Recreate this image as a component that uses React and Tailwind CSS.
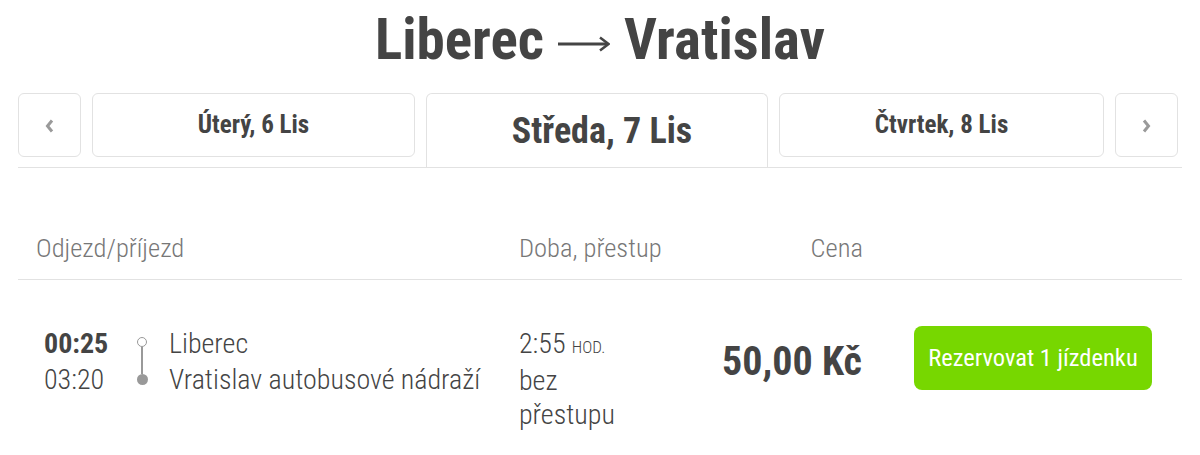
import React from "react";

const font = { fontFamily: '"Roboto Condensed", Roboto, "Liberation Sans", sans-serif' };

function Chevron({ dir }) {
  const pts = dir === "left" ? "7,1.5 2.5,7 7,12.5" : "2,1.5 6.5,7 2,12.5";
  return (
    <svg width="9" height="14" viewBox="0 0 9 14">
      <polyline points={pts} fill="none" stroke="#9a9a9a" strokeWidth="3" strokeLinejoin="miter" />
    </svg>
  );
}

function SmallTab({ children, className = "" }) {
  return (
    <div
      className={
        "h-[64px] mb-[10px] rounded-[6px] border border-[#e2e2e2] flex items-center justify-center text-[25px] font-bold text-[#444] " +
        className
      }
    >
      {children}
    </div>
  );
}

export default function App() {
  return (
    <div className="w-[1200px] h-[455px] bg-white overflow-hidden" style={font}>
      <h1 className="pt-[11px] flex justify-center items-center gap-[14px] text-[57px] leading-none font-bold text-[#444]">
        <span>Liberec</span>
        <span aria-label="→" className="flex items-center pt-[8px]">
          <svg width="52" height="16" viewBox="0 0 52 16">
            <path d="M0 8 H50" stroke="#444" strokeWidth="3" fill="none" />
            <path d="M42 1.5 L50.5 8 L42 14.5" stroke="#444" strokeWidth="2.5" fill="none" strokeLinejoin="miter" />
          </svg>
        </span>
        <span>Vratislav</span>
      </h1>

      <div className="mx-[18px] mt-[25px] flex items-start gap-[11px] border-b border-[#e2e2e2]">
        <SmallTab className="w-[63px] pt-[2px]">
          <Chevron dir="left" />
        </SmallTab>
        <SmallTab className="w-[323px]">Úterý, 6 Lis</SmallTab>
        <div className="w-[342px] h-[74px] -mb-px bg-white rounded-t-[6px] border border-b-0 border-[#e2e2e2] flex items-center justify-center pl-[10px] text-[36px] font-bold text-[#444]">
          Středa, 7 Lis
        </div>
        <SmallTab className="w-[325px]">Čtvrtek, 8 Lis</SmallTab>
        <SmallTab className="w-[63px] pt-[2px]">
          <Chevron dir="right" />
        </SmallTab>
      </div>

      <div className="mx-[18px] mt-[64px] flex border-b border-[#e2e2e2] pb-[15px] text-[26.5px] font-light text-[#777] leading-[32px]">
        <div className="w-[501px] pl-[18px]">Odjezd/příjezd</div>
        <div className="w-[240px]">Doba, přestup</div>
        <div className="w-[104px] text-right">Cena</div>
      </div>

      <div className="mx-[18px] mt-[46px] flex items-start text-[28px] font-light text-[#444]">
        <div className="w-[106px] pl-[26px] leading-[36px]">
          <div className="font-bold">00:25</div>
          <div>03:20</div>
        </div>
        <div className="w-[36px] flex flex-col items-center pt-[11px]">
          <div className="w-[10px] h-[10px] rounded-full border-[1.5px] border-[#999] bg-white" />
          <div className="w-[1.5px] h-[27px] bg-[#999]" />
          <div className="w-[11px] h-[11px] rounded-full bg-[#999]" />
        </div>
        <div className="w-[359px] pl-[9px] leading-[36px]">
          <div>Liberec</div>
          <div>Vratislav autobusové nádraží</div>
        </div>
        <div className="w-[189px] leading-[34px] pt-px">
          <div>
            2:55 <span className="text-[17px] uppercase">hod.</span>
          </div>
          <div>bez</div>
          <div>přestupu</div>
        </div>
        <div className="w-[154px] text-right text-[40px] font-bold leading-none mt-[16px] whitespace-nowrap">
          50,00 Kč
        </div>
        <div className="ml-[52px] w-[238px] h-[64px] rounded-[8px] bg-[#77d700] flex items-center justify-center text-white text-[24.5px] font-normal">
          Rezervovat 1 jízdenku
        </div>
      </div>
    </div>
  );
}
